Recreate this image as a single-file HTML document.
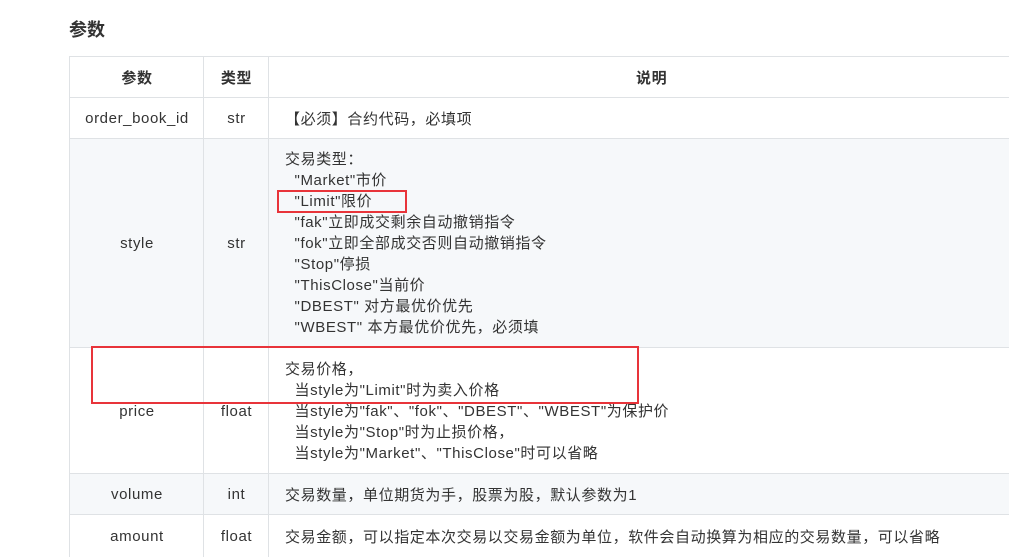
<!DOCTYPE html>
<html><head><meta charset="utf-8"><style>
body{margin:0;width:1009px;height:554px;overflow:hidden;background:#fff;font-family:"Liberation Sans","Noto Sans CJK SC",sans-serif;color:#333;font-size:15px;letter-spacing:0.6px;position:relative}
.a{position:absolute}
.h{left:69px;top:16px;font-size:18px;font-weight:bold;color:#333;letter-spacing:0}
.row{position:absolute;left:69px;width:1000px;border-top:1px solid #dfe2e5}
.c{position:absolute;top:0;bottom:0;border-left:1px solid #dfe2e5;display:flex;align-items:center}
.c1{left:0;width:134px;justify-content:center}
.c2{left:134px;width:65px;justify-content:center}
.c3{left:199px;width:800px;padding-left:16px;box-sizing:border-box}
.lines{line-height:21px;white-space:pre}
.red{position:absolute;border:2px solid #e8343a}
</style></head><body>
<div class="a h">参数</div>
<div class="row" style="top:56px;height:41px"><div class="c c1" style="font-weight:bold">参数</div><div class="c c2" style="font-weight:bold">类型</div><div class="c c3" style="font-weight:bold"><span style="position:absolute;left:367px">说明</span></div></div>
<div class="row" style="top:97px;height:41px"><div class="c c1">order_book_id</div><div class="c c2">str</div><div class="c c3">【必须】合约代码，必填项</div></div>
<div class="row" style="top:138px;height:209px;background:#f6f8fa"><div class="c c1">style</div><div class="c c2">str</div><div class="c c3"><div class="lines">交易类型：
  "Market"市价
  "Limit"限价
  "fak"立即成交剩余自动撤销指令
  "fok"立即全部成交否则自动撤销指令
  "Stop"停损
  "ThisClose"当前价
  "DBEST" 对方最优价优先
  "WBEST" 本方最优价优先，必须填</div></div></div>
<div class="row" style="top:347px;height:126px"><div class="c c1">price</div><div class="c c2">float</div><div class="c c3"><div class="lines">交易价格，
  当style为"Limit"时为卖入价格
  当style为"fak"、"fok"、"DBEST"、"WBEST"为保护价
  当style为"Stop"时为止损价格，
  当style为"Market"、"ThisClose"时可以省略</div></div></div>
<div class="row" style="top:473px;height:41px;background:#f6f8fa"><div class="c c1">volume</div><div class="c c2">int</div><div class="c c3">交易数量，单位期货为手，股票为股，默认参数为1</div></div>
<div class="row" style="top:514px;height:42px"><div class="c c1">amount</div><div class="c c2">float</div><div class="c c3">交易金额，可以指定本次交易以交易金额为单位，软件会自动换算为相应的交易数量，可以省略</div></div>
<div class="red" style="left:277px;top:190px;width:126px;height:19px"></div>
<div class="red" style="left:91px;top:346px;width:544px;height:54px"></div>
</body></html>
